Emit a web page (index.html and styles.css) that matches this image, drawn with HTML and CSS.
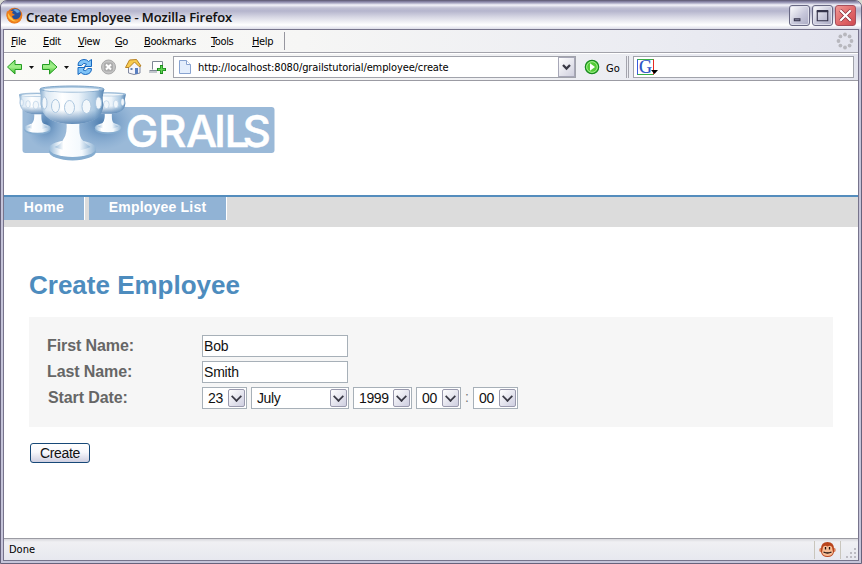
FILE: index.html
```html
<!DOCTYPE html>
<html lang="en">
<head>
<meta charset="utf-8">
<title>Create Employee</title>
<link rel="stylesheet" href="styles.css">
</head>
<body>
<div class="window">
  <header class="titlebar">
    <svg class="fox" width="17" height="17" viewBox="0 0 17 17"><circle cx="8.5" cy="8.5" r="7.8" fill="#e8731c"/><circle cx="9.2" cy="7.2" r="5.8" fill="#234f9c"/><path d="M7 3q4-3 7 2l-3 1-2-2z" fill="#64a3dc"/><path d="M1 4l2 1q2-2 4-1L6 6l3 2-3 1q1 4 5 3 4-1 4-6 2 6-2 9-5 3-9 0Q-1 11 1 4z" fill="#ed7d1c"/><path d="M2 6q-1 5 3 7 4 3 8 0-5 2-7-2l-2-2z" fill="#ffc344"/></svg>
    <span class="title">Create Employee - Mozilla Firefox</span>
    <div class="controls">
      <svg class="ctl" viewBox="0 0 20 20"><path d="M4 13h7v3H4z" fill="#333249"/><path d="M5 14.500h5" stroke="#8b8ba5"/></svg>
      <svg class="ctl" viewBox="0 0 20 20"><path d="M4.500 5v10.500h11V5" fill="none" stroke="#333249" stroke-width="1.200"/><path d="M4 5.500h12" stroke="#333249" stroke-width="2.400"/></svg>
      <svg class="ctl close" viewBox="0 0 20 20"><path d="M4.500 4.500l11 11M15.500 4.500l-11 11" stroke="#7c2634" stroke-width="3.600"/><path d="M4.500 4.500l11 11M15.500 4.500l-11 11" stroke="#fff" stroke-width="2.400"/></svg>
    </div>
  </header>
  <div class="client">
    <nav class="menubar">
      <span class="m-file"><u>F</u>ile</span><span class="m-edit"><u>E</u>dit</span><span class="m-view"><u>V</u>iew</span><span class="m-go"><u>G</u>o</span><span class="m-book"><u>B</u>ookmarks</span><span class="m-tools"><u>T</u>ools</span><span class="m-help"><u>H</u>elp</span>
      <i class="menusep"></i>
      <svg class="throbber" width="18" height="18" viewBox="0 0 18 18"><g fill="#b7b7bd"><circle cx="9" cy="2.500" r="1.900"/><circle cx="13.600" cy="4.400" r="1.900"/><circle cx="15.500" cy="9" r="1.900"/><circle cx="13.600" cy="13.600" r="1.900"/><circle cx="9" cy="15.500" r="1.900"/><circle cx="4.400" cy="13.600" r="1.900"/><circle cx="2.500" cy="9" r="1.900"/><circle cx="4.400" cy="4.400" r="1.900"/></g></svg>
    </nav>
    <div class="toolbar">
      <svg class="icons" width="166" height="26" viewBox="4 54 166 26">
        <defs><linearGradient id="gr" x1="0" y1="0" x2="0" y2="1"><stop offset="0" stop-color="#7fe070"/><stop offset=".5" stop-color="#a2f08a"/><stop offset="1" stop-color="#35b823"/></linearGradient></defs>
        <path d="M7.500 67l7.500-7v4.500h6.500v5H15V74z" fill="url(#gr)" stroke="#249c22"/>
        <path d="M29 66h5l-2.500 3z" fill="#111"/>
        <path d="M57 67l-7.500-7v4.500h-7v5h7V74z" fill="url(#gr)" stroke="#249c22"/>
        <path d="M64 66h5l-2.500 3z" fill="#111"/>
        <path d="M78 65.500q0-5.500 6-6 3 0 4.500 2l3-2v7h-7l2-2.500q-3-2-5 1.500z" fill="#80c4f7" stroke="#1668c0"/>
        <path d="M91.500 68.500q0 5.500-6 6-3 0-4.500-2l-3 2v-7h7l-2 2.500q3 2 5-1.500z" fill="#80c4f7" stroke="#1668c0"/>
        <circle cx="108.500" cy="67" r="7" fill="#c4c4c4" stroke="#a8a8a8"/><rect x="104" y="62.500" width="9" height="9" rx="2" fill="#acacac"/><path d="M106 64.500l5 5m0-5l-5 5" stroke="#fff" stroke-width="2"/>
        <path d="M128.500 66v7l5.500 1.500 6-1.500v-8l-5-4z" fill="#f5f5fa" stroke="#8189a0"/><path d="M125.500 67.500l4-7.500 7-.5 4.500 6.500-2 .5-4.500-4.500-5.500 5.500z" fill="#f8cb4e" stroke="#b88224"/><path d="M135 68h3v6h-3z" fill="#597fc0"/><path d="M130.500 68h2v2h-2z" fill="#6680ad"/>
        <path d="M152.500 69.500v-8h10v4" fill="#fff" stroke="#7e8794"/><path d="M149.500 70.500h9" fill="none" stroke="#7e8794"/><path d="M149 72h8" stroke="#8a94a2"/><path d="M161.500 65v9M157 69.500h9" stroke="#198a1b" stroke-width="3"/><path d="M161.500 66v7M158 69.500h7" stroke="#5fd251" stroke-width="1.500"/>
      </svg>
      <div class="address">
        <svg class="page" width="12" height="14" viewBox="0 0 12 14"><path d="M.5.5h7l4 4v9H.5z" fill="#e4eefc" stroke="#88a3d0"/><path d="M7.500.5v4h4" fill="#fff" stroke="#88a3d0"/></svg>
        <span class="url">http://localhost:8080/grailstutorial/employee/create</span>
        <span class="arrow"><svg width="9" height="7" viewBox="0 0 9 7"><path d="M1 1l3.500 3.500L8 1" fill="none" stroke="#383844" stroke-width="2.300"/></svg></span>
      </div>
      <svg class="goicon" width="16" height="16" viewBox="0 0 16 16"><circle cx="8" cy="8" r="6.700" fill="#53cb37" stroke="#188b20" stroke-width="1.200"/><circle cx="8" cy="8" r="5.300" fill="none" stroke="#a6ee92"/><path d="M6 4.300l5 3.700-5 3.700z" fill="#fff"/></svg>
      <span class="go">Go</span>
      <i class="grip"></i>
      <div class="search"><span class="google">G</span><svg class="gdrop" width="7" height="4" viewBox="0 0 7 4"><path d="M0 0h7L3.500 4z"/></svg></div>
    </div>
    <main class="content">
      <svg class="logo" width="276" height="84" viewBox="0 0 276 84">
        <defs>
          <linearGradient id="bowl"><stop offset="0" stop-color="#7fa6ca"/><stop offset=".1" stop-color="#dce9f4"/><stop offset=".35" stop-color="#fff"/><stop offset=".6" stop-color="#edf4fa"/><stop offset=".85" stop-color="#a9c7e1"/><stop offset="1" stop-color="#5482b0"/></linearGradient>
          <linearGradient id="bottom" x1="0" y1="0" x2="0" y2="1"><stop offset=".6" stop-color="#3c70a7" stop-opacity="0"/><stop offset="1" stop-color="#3c70a7" stop-opacity=".8"/></linearGradient>
          <linearGradient id="stem"><stop offset="0" stop-color="#94b8d8"/><stop offset=".25" stop-color="#fff"/><stop offset=".7" stop-color="#f4f9fd"/><stop offset="1" stop-color="#8fb3d4"/></linearGradient>
          <radialGradient id="shade"><stop offset="0" stop-color="#396da3" stop-opacity=".8"/><stop offset="1" stop-color="#6c9aca" stop-opacity="0"/></radialGradient>
          <g id="cup"><ellipse cx="34" cy="66.500" rx="23.500" ry="9" fill="#86add0"/><ellipse cx="34" cy="63.500" rx="23.500" ry="8.500" fill="url(#stem)"/><path d="M28 36h13q-1 14 2 18 3 4 9 8-9 4-18 4t-18-4q7-3 9-8 4-5 3-18z" fill="url(#stem)"/><path d="M1 4q2 7 1 15 2 20 32 20t31-19q-2-8 1-16z" fill="url(#bowl)"/><path d="M1 4q2 7 1 15 2 20 32 20t31-19q-2-8 1-16z" fill="url(#bottom)"/><ellipse cx="33.500" cy="4" rx="32" ry="3" fill="#a9c6df" stroke="#7fa6ca"/><ellipse cx="33" cy="4.800" rx="28" ry="2" fill="#f2f7fb"/><g fill="#f2f7fb" stroke="#acc7e0"><ellipse cx="6" cy="18" rx="2.500" ry="6"/><ellipse cx="17" cy="21" rx="4" ry="6.500"/><ellipse cx="31" cy="22.500" rx="5" ry="7"/><ellipse cx="48" cy="21.500" rx="4.500" ry="7"/><ellipse cx="60" cy="18" rx="3" ry="6"/></g></g>
        </defs>
        <rect x="18.500" y="26" width="252" height="46" rx="3" fill="#9ab9d8"/>
        <ellipse cx="98" cy="42" rx="33" ry="27" fill="url(#shade)"/><ellipse cx="42" cy="43" rx="20" ry="25" fill="url(#shade)"/>
        <use href="#cup" transform="translate(14.500 11.500) scale(.56)"/>
        <use href="#cup" transform="translate(85 11) scale(.56)"/>
        <use href="#cup" transform="translate(34.500 4)"/>
        <text class="brand" x="121.500 154 182 210 220.500 238.500" y="65.500">GRAILS</text>
      </svg>
      <nav class="nav"><a class="home">Home</a><a class="list">Employee List</a></nav>
      <section class="body">
        <h1>Create Employee</h1>
        <form class="panel">
          <div class="row"><label>First Name:</label><span class="field">Bob</span></div>
          <div class="row"><label>Last Name:</label><span class="field">Smith</span></div>
          <div class="row"><label class="date">Start Date:</label>
            <span class="select s45">23<i class="drop"></i></span><span class="select s98">July<i class="drop"></i></span><span class="select s59">1999<i class="drop"></i></span><span class="select s45">00<i class="drop"></i></span><span class="colon">:</span><span class="select s45">00<i class="drop"></i></span></div>
        </form>
        <button class="create">Create</button>
      </section>
    </main>
    <footer class="status"><span class="done">Done</span>
      <div class="monkey"><svg width="17" height="17" viewBox="0 0 17 17"><circle cx="2.500" cy="9" r="2.300" fill="#d9825c"/><circle cx="14.500" cy="9" r="2.300" fill="#d9825c"/><path d="M2 8q0-7 6.500-7T15 8v3q-1 5-6.500 5T2 11z" fill="#b9451d"/><path d="M4 6q2-2 4.500-.5Q11 4 13 6l1 5.500q-1 3.500-5.500 3.500T3 11.500z" fill="#f7bd96"/><path d="M6.500 6v2.500M10.500 6v2.500M4.500 11q4 2 8 0" stroke="#22100d" stroke-width="1.300" fill="none"/></svg></div>
      <svg class="resize" width="13" height="13" viewBox="0 0 13 13"><path d="M9 1h2v2H9zM5 5h2v2H5zM9 5h2v2H9zM1 9h2v2H1zM5 9h2v2H5zM9 9h2v2H9z" fill="#bcbbc2"/></svg>
    </footer>
  </div>
</div>
</body>
</html>
```
FILE: styles.css
```css
*{box-sizing:border-box}
body{margin:0;background:#d9dad2;font-family:"Liberation Sans",Arial,sans-serif;overflow:hidden}
.window{width:862px;height:564px;border:1px solid #66627c;border-radius:7px 7px 0 0;background:#c5c4d9;display:flex;flex-direction:column;overflow:hidden}
.titlebar{height:28px;flex:none;display:flex;align-items:center;padding:3px 5px 0 5px;background:linear-gradient(#736f91 0,#aaa9c4 2px,#f4f4fa 4px,#c0c0d4 7px,#b5b5cd 10px,#d7d7e4 16px,#fff 24px,#dcdce8 28px)}
.fox{flex:none;margin-top:-3px}
.title{margin-left:3px;font:600 13px/20px "Open Sans",sans-serif;letter-spacing:-.07px;white-space:nowrap;-webkit-text-stroke:.1px #111;color:#111}
.controls{margin-left:auto;display:flex;gap:2px;margin-top:-2px}
.ctl{width:21px;height:21px;border:1px solid #686883;border-radius:3px;background:linear-gradient(135deg,#fff,#c8c8db 55%,#aaaac3);box-shadow:inset 0 0 0 1px #e0e0eb}
.close{background:linear-gradient(135deg,#ee9894,#e06466 60%,#cf4a50);border-color:#a64e5b;box-shadow:none}
.client{flex:1;margin:0 2px 2px;border:1px solid #77748c;display:flex;flex-direction:column;min-height:0}
.menubar,.toolbar,.status{font:11px/24px "DejaVu Sans Condensed","DejaVu Sans",sans-serif;font-stretch:condensed;color:#000;background:linear-gradient(90deg,#fafaf7,#f6f6f5 35%,#ebecf2 75%,#e3e4ee)}
.menubar{height:23px;flex:none;display:flex;border-bottom:1px solid #a3a3ab;padding-left:7px;letter-spacing:-.37px}
.menubar span{flex:none;white-space:nowrap}
.menubar u{text-underline-offset:1px;text-decoration-thickness:1px}
.m-file{width:32px}.m-edit{width:35px}.m-view{width:37px}.m-go{width:29px}.m-book{width:67px}.m-tools{width:41px}.m-help{width:32px}
.menusep{width:1px;height:18px;margin-top:2px;background:#96969f}
.throbber{margin:2px 4px 0 auto}
.toolbar{height:28px;flex:none;display:flex;align-items:center;border-top:1px solid #fff;border-bottom:1px solid #9b9ba3;padding-right:4px}
.icons{flex:none}
.address{margin-left:3px;width:403px;height:22px;border:1px solid #a1a3ab;background:#fff;display:flex;align-items:center;flex:none}
.page{margin-left:5px;flex:none}
.url{margin-left:7px;letter-spacing:-.11px;line-height:20px;white-space:nowrap;margin-top:2px}
.arrow{margin-left:auto;width:17px;height:20px;border:1px solid #a7a7b7;background:linear-gradient(135deg,#fff,#d0d0de);display:flex;align-items:center;justify-content:center}
.goicon{margin-left:8px;flex:none}
.go{margin-left:6px;width:15px;line-height:20px;margin-top:3px}
.grip{width:3px;height:22px;border:solid #a4a4ad;border-width:0 1px;margin-left:5px}
.search{margin-left:4px;flex:1;height:22px;border:1px solid #a1a3ab;background:#fff;display:flex;align-items:center;padding-left:3px}
.google{width:17px;height:16px;border:1px solid;border-color:#37ad45 #e52821 #37ad45 #3a5bdc;font:18px/14px "Liberation Serif",serif;text-align:center;color:#2751c5;-webkit-text-stroke:.2px #2751c5}
.gdrop{margin:10px 0 0 -3px}
.content{flex:1;background:#fff;min-height:0;width:854px}
.logo{display:block;width:276px;height:84px}
.brand{font:500 44px Inter,sans-serif;fill:#fff;stroke:#fff;stroke-width:.5;stroke-linejoin:round}
.nav{margin-top:30px;height:32px;border-top:2px solid #548dbd;background:#dcdcdc;display:flex;gap:4px}
.nav a{height:23px;border-right:1px solid #fff;background:#91b3d5;color:#fff;font-weight:700;font-size:14px;line-height:21px;text-align:center;white-space:nowrap;letter-spacing:.4px}
.home{width:81px}
.nav .list{width:138px;letter-spacing:.2px}
.body{padding:0 25px}
h1{margin:43px 0 0;font-size:26px;line-height:30px;letter-spacing:0;color:#4d8cbe}
.panel{margin:17px 0 0;height:110px;background:#f6f6f6;padding:18px}
.row{height:22px;margin-bottom:4px;display:flex}
label{width:155px;font-weight:700;font-size:16px;line-height:21px;color:#666;letter-spacing:-.1px;flex:none}
.date{padding-left:1px}
.field{width:146px;height:22px;border:1px solid #a7b0b8;background:#fff;padding-left:1px;font-size:14px;line-height:20px;color:#111;letter-spacing:-.2px}
.select{height:22px;border:1px solid #a7b0b8;background:#fff;font-size:14px;line-height:21px;padding:0 1px 0 5px;display:flex;align-items:center;margin-right:4px;letter-spacing:-.4px;color:#111}
.s45{width:45px}.s98{width:98px}.s59{width:59px}
.drop{margin-left:auto;width:17px;height:18px;border:1px solid #9999ad;border-radius:2px;background:linear-gradient(135deg,#fff,#cecee0);display:flex;align-items:center;justify-content:center}
.drop::after{content:"";width:7px;height:7px;border:solid #383844;border-width:0 2.5px 2.5px 0;transform:translateY(-2px) rotate(45deg) scale(.85)}
.colon{width:8px;font-size:14px;line-height:20px;color:#777}
.create{display:block;margin:16px 0 0 1px;width:60px;height:20px;padding:0;border:1px solid #174878;border-radius:3px;background:linear-gradient(#fff 0,#f8f8fc 45%,#cfcfe0 100%);font:14px/18px "Liberation Sans",sans-serif;color:#111;letter-spacing:-.35px}
.status{height:22px;flex:none;border-top:1px solid #9b9ba3;display:flex;align-items:center;background:linear-gradient(#d8d8dd,#f0f0f3 3px,#e7e8ef)}
.done{margin-left:5px;line-height:20px}
.monkey{margin-left:auto;border:solid #c9c6bd;border-width:0 1px;width:27px;height:18px;padding-left:4px}
.resize{margin:8px 0 0 4px}
```
